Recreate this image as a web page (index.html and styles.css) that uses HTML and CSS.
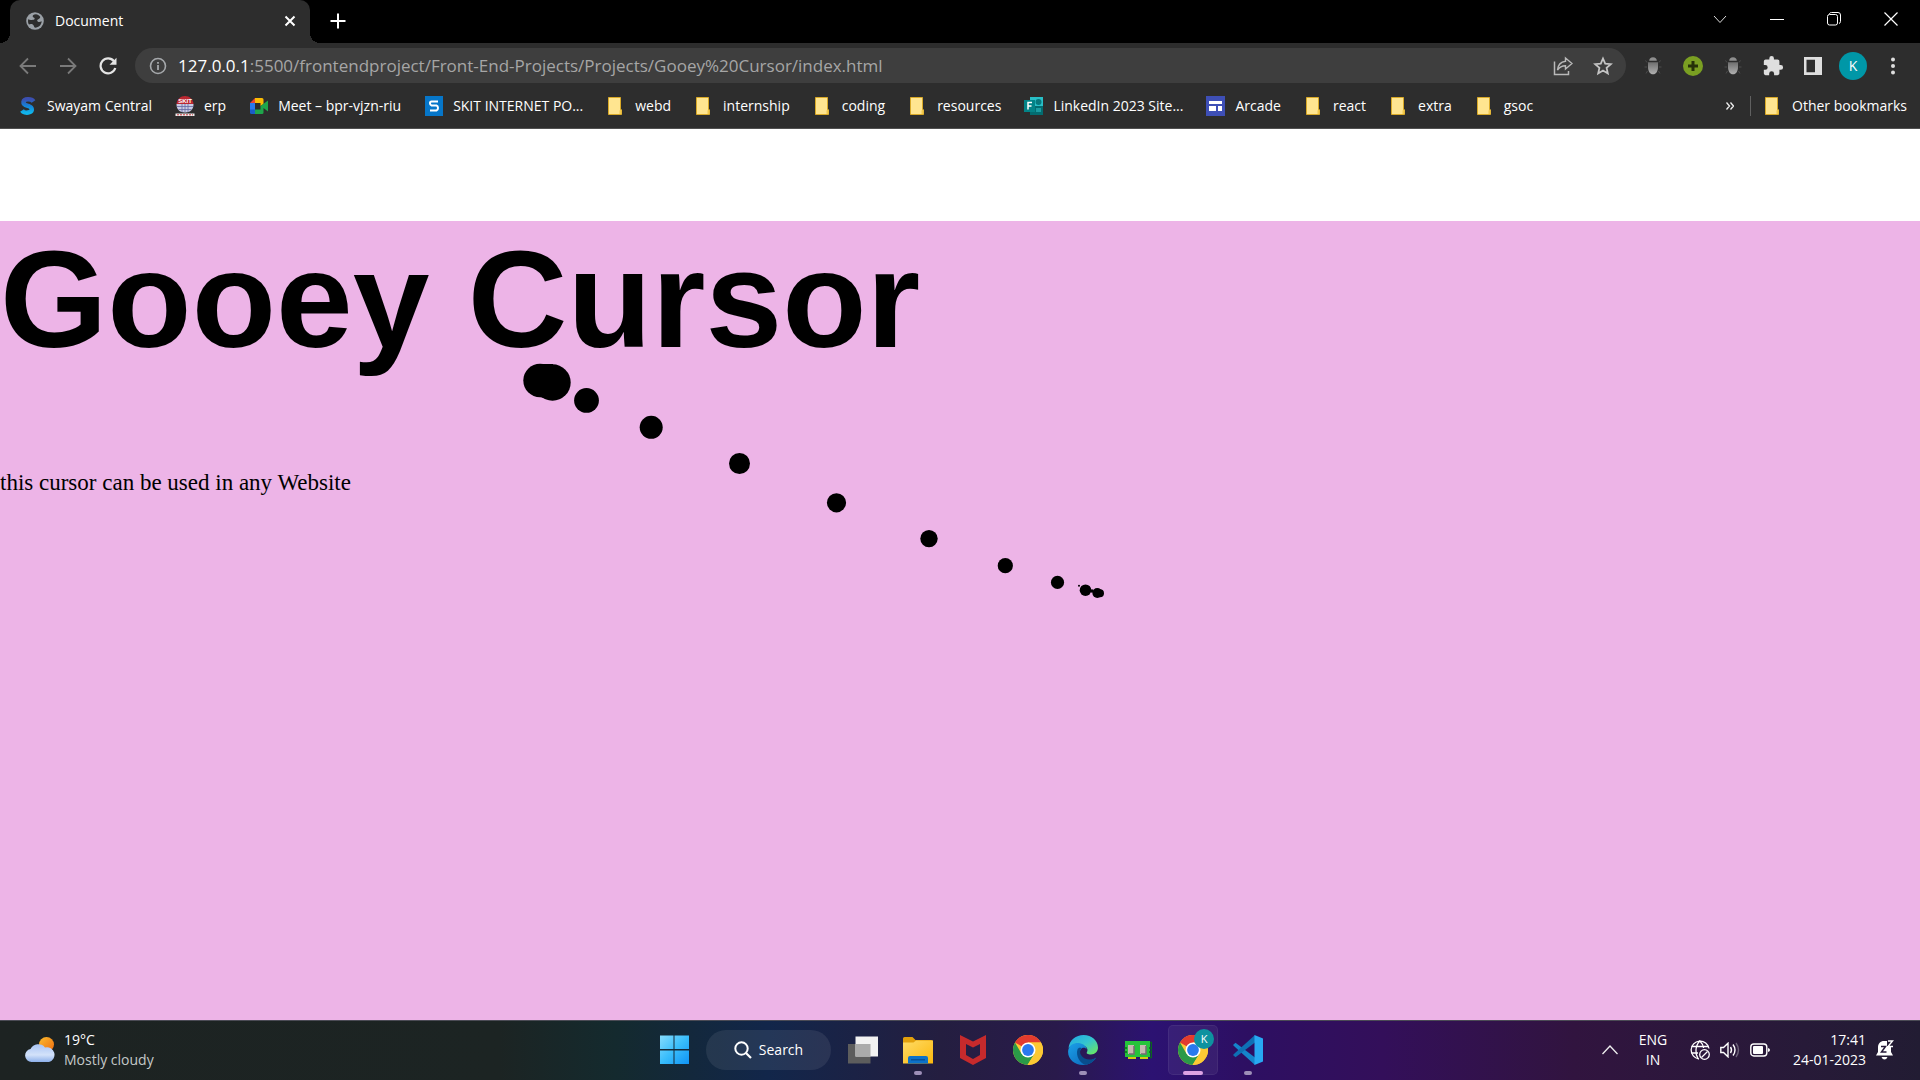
FILE: index.html
```html
<!DOCTYPE html>
<html lang="en">
<head>
<meta charset="utf-8">
<meta name="viewport" content="width=device-width, initial-scale=1">
<title>Document</title>
<link rel="stylesheet" href="styles.css">
</head>
<body>
<svg class="defs" aria-hidden="true">
  <defs>
    <linearGradient id="g-s" x1="0" y1="0" x2="0" y2="1"><stop offset="0" stop-color="#3b4fb0"/><stop offset=".5" stop-color="#1583d8"/><stop offset="1" stop-color="#10b4ea"/></linearGradient>
    <linearGradient id="g-bug" x1="0" y1="0" x2="0" y2="1"><stop offset="0" stop-color="#6e6e6e"/><stop offset="1" stop-color="#b0b0b0"/></linearGradient>
    <linearGradient id="g-win" x1="0" y1="0" x2="1" y2="1"><stop offset="0" stop-color="#86dcfd"/><stop offset=".5" stop-color="#39bdfb"/><stop offset="1" stop-color="#0f93f5"/></linearGradient>
    <linearGradient id="g-sun" x1="0" y1="0" x2="1" y2="1"><stop offset="0" stop-color="#fbbc2c"/><stop offset="1" stop-color="#ee6a10"/></linearGradient>
    <linearGradient id="g-cloud" x1="0" y1="0" x2="0" y2="1"><stop offset="0" stop-color="#a9c4f3"/><stop offset=".6" stop-color="#d3e2fa"/><stop offset="1" stop-color="#8db0ea"/></linearGradient>
    <linearGradient id="g-folder" x1="0" y1="0" x2="1" y2="1"><stop offset="0" stop-color="#ffdb66"/><stop offset="1" stop-color="#fbb80d"/></linearGradient>
    <linearGradient id="g-edge" x1="0" y1="0" x2="1" y2="1"><stop offset="0" stop-color="#1fa6e6"/><stop offset=".5" stop-color="#35c5cf"/><stop offset="1" stop-color="#71ea55"/></linearGradient>
    <linearGradient id="g-edge-low" x1="0" y1="0" x2="1" y2="1"><stop offset="0" stop-color="#1ba0e8"/><stop offset="1" stop-color="#0a62b5"/></linearGradient>
    <symbol id="i-folder" viewBox="0 0 20 20"><path d="M2.500 1.500h12v12.500h1v4.500h-13z" fill="#ffe590" stroke="#d9a927"/><path d="M13.500 18v-3.500l2-1.500v5z" fill="#f1c84c"/></symbol>
    <symbol id="i-bug" viewBox="0 0 20 20"><path d="M4 6.500 2.500 4.500M16 6.500l1.500-2M4 11H1.500M16 11h2.500M4.500 15 3 17.500M15.500 15l1.500 2.500" stroke="#4c4c4c" fill="none"/><path d="M6.200 4.800C6.200 2.600 7.700 1.200 10 1.200s3.800 1.400 3.800 3.600z" fill="#8e8e8e"/><path d="M5 6.200h10V11c0 4-1.800 7.300-5 7.300S5 15 5 11z" fill="url(#g-bug)"/></symbol>
    <symbol id="i-chrome" viewBox="0 0 30 30"><circle cx="15" cy="15" r="15" fill="#fcc934"/><path d="M15 15 2 7.500A15 15 0 0 1 28 7.500H15z" fill="#e33b2e"/><path d="M2 7.500A15 15 0 0 0 14.500 30l7-11.200L15 15 8.500 18.700z" fill="#2a9a48"/><path d="M21.500 18.800 14.500 30A15 15 0 0 0 28 7.500H15z" fill="#fcc934"/><circle cx="15" cy="15" r="7.500" fill="#fff"/><circle cx="15" cy="15" r="5.900" fill="#2a79ee"/></symbol>
  </defs>
</svg>

<header class="browser">
  <div class="tabstrip">
    <div class="tab">
      <svg class="favicon" viewBox="0 0 18 18"><circle cx="9" cy="9" r="8.800" fill="#9aa0a6"/><path d="M10 2.200c-2.500 0-3.500 1-3.300 2.300.2 1.200 2 .8 2 2.200 0 1-1.500 1-2.700 1.200-1.500.3-2.500 0-3.800-.7C1.800 9.500 2 11 3 12.500c1-.6 2.600-.7 3.800 0 1.200.8 1 2.200 2.200 3.300 4-.3 6.500-3.200 6.700-6.500-1.500.6-2.700 1.200-4 .2-1-.8-.5-1.700.5-2.200 1-.6 2.100-1.200 2-2.600C13 3.200 11.500 2.200 10 2.200z" fill="#2d2d2d"/></svg>
      <span class="tab-title">Document</span>
      <button class="tab-close" aria-label="Close tab"><svg width="12" height="12" viewBox="0 0 12 12"><path d="m1.500 1.500 9 9m0-9-9 9" stroke="#fff" stroke-width="2"/></svg></button>
    </div>
    <button class="new-tab" aria-label="New tab"><svg width="16" height="16" viewBox="0 0 16 16"><path d="M8 .5v15M.5 8h15" stroke="#fff" stroke-width="2"/></svg></button>
    <div class="window-controls">
      <button aria-label="Search tabs"><svg width="14" height="14" viewBox="0 0 14 14"><path d="m1 4 6 6.500L13 4" fill="none" stroke="#ddd"/></svg></button>
      <button aria-label="Minimize"><svg width="14" height="14" viewBox="0 0 14 14"><path d="M0 7.500h14" stroke="#fff"/></svg></button>
      <button aria-label="Restore"><svg width="14" height="14" viewBox="0 0 14 14"><rect x=".5" y="2.500" width="10" height="10.500" rx="2" fill="none" stroke="#fff"/><path d="M2.500 2V1.500q.5-1 2-1H11q2.500 0 2.500 2.500v6.500q0 1.500-1.500 2" fill="none" stroke="#fff"/></svg></button>
      <button aria-label="Close"><svg width="14" height="14" viewBox="0 0 14 14"><path d="m.5.5 13 13m0-13-13 13" stroke="#fff" stroke-width="1.200"/></svg></button>
    </div>
  </div>

  <div class="toolbar">
    <nav class="history" aria-label="History">
      <button aria-label="Back"><svg width="18" height="18" viewBox="0 0 18 18"><path d="M17 9H2m7-7.500L1.500 9 9 16.500" fill="none" stroke="#7a7a7a" stroke-width="1.800"/></svg></button>
      <button aria-label="Forward"><svg width="18" height="18" viewBox="0 0 18 18"><path d="M1 9h15M9 1.500 16.500 9 9 16.500" fill="none" stroke="#7a7a7a" stroke-width="1.800"/></svg></button>
      <button aria-label="Reload"><svg width="18" height="18" viewBox="0 0 18 18"><path d="M15 4.200A7.500 7.500 0 1 0 16.300 11" fill="none" stroke="#e4e4e4" stroke-width="2.200"/><path d="M17.500.8v7h-7z" fill="#e4e4e4"/></svg></button>
    </nav>
    <div class="omnibox">
      <svg class="info" width="18" height="18" viewBox="0 0 18 18"><circle cx="9" cy="9" r="7.500" fill="none" stroke="#a5a8ab" stroke-width="1.600"/><path d="M9 8v5M9 5v1.700" stroke="#a5a8ab" stroke-width="1.800"/></svg>
      <label class="host" for="url">127.0.0.1</label><input id="url" class="url" type="text" value=":5500/frontendproject/Front-End-Projects/Projects/Gooey%20Cursor/index.html">
      <button aria-label="Share"><svg width="20" height="20" viewBox="0 0 20 20"><path d="M1.500 5.500v13h14v-3.500" fill="none" stroke="#b9b9b9" stroke-width="1.500"/><path d="M12.500 2 19 7.500 12.500 13v-3.200C9 9.800 6.500 11 4.500 14c.5-5 3.500-8.200 8-8.700z" fill="none" stroke="#b9b9b9" stroke-width="1.400"/></svg></button>
      <button aria-label="Bookmark this tab"><svg width="20" height="20" viewBox="0 0 20 20"><path d="m10 2.500 2.200 5.200 5.600.5-4.200 3.700 1.200 5.500L10 14.500l-4.800 2.900 1.200-5.500-4.200-3.700 5.600-.5z" fill="none" stroke="#c4c4c4" stroke-width="1.800"/></svg></button>
    </div>
    <div class="extensions">
      <button aria-label="Debugger"><svg width="20" height="20"><use href="#i-bug"/></svg></button>
      <button aria-label="Add"><svg width="20" height="20" viewBox="0 0 20 20"><circle cx="10" cy="10" r="10" fill="#7a9f22"/><path d="M10 5v10M5 10h10" stroke="#263209" stroke-width="3"/></svg></button>
      <button aria-label="Inspector"><svg width="20" height="20"><use href="#i-bug"/></svg></button>
      <button aria-label="Extensions"><svg width="22" height="22" viewBox="0 0 24 24"><path d="M20.500 11H19V7a2 2 0 0 0-2-2h-4V3.500a2.500 2.500 0 0 0-5 0V5H4a2 2 0 0 0-2 2v3.800h1.500a2.700 2.700 0 0 1 0 5.400H2V20c0 1.100.9 2 2 2h3.800v-1.500a2.700 2.700 0 0 1 5.400 0V22H17a2 2 0 0 0 2-2v-4h1.500a2.500 2.500 0 0 0 0-5z" fill="#dedede"/></svg></button>
      <button aria-label="Side panel"><svg width="18" height="18" viewBox="0 0 18 18"><path d="M0 0h18v18H0zm2.500 2.800v12.500h8.500V2.800z" fill="#dedede" fill-rule="evenodd"/></svg></button>
      <button aria-label="Profile"><span class="avatar">K</span></button>
      <button aria-label="Menu"><svg width="4" height="18" viewBox="0 0 4 18"><circle cx="2" cy="2.500" r="2" fill="#dedede"/><circle cx="2" cy="9" r="2" fill="#dedede"/><circle cx="2" cy="15.500" r="2" fill="#dedede"/></svg></button>
    </div>
  </div>

  <nav class="bookmarks" aria-label="Bookmarks">
    <a href="#"><svg viewBox="0 0 20 20"><path d="M15.500 5.500C13.500 2.500 6 2.500 5.500 5.800S9 9.500 11.500 10.500s3.500 4.500 0 5.700-6.500-.2-7.500-1.700" fill="none" stroke="url(#g-s)" stroke-width="4.500"/></svg>Swayam Central</a>
    <a href="#"><svg viewBox="0 0 20 20"><path d="M1.500 8C2 3 5.500 0 10 0s8 3 8.500 8z" fill="#bb2831"/><path d="M1.500 8h17c0 5.500-3 8.500-8.500 8.500S1.500 13.500 1.500 8z" fill="#c9cbe4"/><path d="M2 10.500h16M3.500 13.500h13M7 8v8M10 8v8M13 8v8" stroke="#6469a3" stroke-width=".8"/><text x="10" y="7.200" class="tiny-logo">SKIT</text><path d="M.5 17.500h19V20H.5z" fill="#eee"/><path d="M2 18.800h16" stroke="#c7373c" stroke-dasharray="2 1"/></svg>erp</a>
    <a href="#"><svg viewBox="0 0 20 20"><path d="M1 7 6 2v5z" fill="#ea4335"/><path d="M6 2h7q1.500 0 1.500 1.500V8l-3 2V7H6z" fill="#fbbc04"/><path d="M1 7h5v7H1z" fill="#2a79ee"/><path d="M1 13.500h5V18H2.500Q1 18 1 16.500z" fill="#1a5cc8"/><path d="M6 13.500h5.500V10L19 4.500v11L14.500 12v4.500q0 1.500-1.500 1.500H6z" fill="#1fa64b"/></svg>Meet – bpr-vjzn-riu</a>
    <a href="#"><svg viewBox="0 0 20 20"><path d="M1 0h18v20H1z" fill="#0676c9"/><path d="M14 5.500H7.500Q6 5.500 6 7.300T7.500 9.500h5q1.500.5 1.500 2.500t-1.500 2.500H6" fill="none" stroke="#fff" stroke-width="2"/></svg>SKIT INTERNET PO...</a>
    <a href="#"><svg><use href="#i-folder"/></svg>webd</a>
    <a href="#"><svg><use href="#i-folder"/></svg>internship</a>
    <a href="#"><svg><use href="#i-folder"/></svg>coding</a>
    <a href="#"><svg><use href="#i-folder"/></svg>resources</a>
    <a href="#"><svg viewBox="0 0 20 20"><path d="M6 1h13v9H6z" fill="#28bfc7"/><path d="M6 10h13v9H6z" fill="#036c70"/><circle cx="14.500" cy="6" r="3" fill="#07777c"/><path d="M12 12h5v4h-5z" fill="#1b9ca2"/><path d="M0 4h11v12H0z" fill="#038387"/><path d="M4 13.500v-7h4M4 10h3.500" stroke="#fff" stroke-width="1.500" fill="none"/></svg>LinkedIn 2023 Site...</a>
    <a href="#"><svg viewBox="0 0 20 20"><path d="M0 0h19v20H0z" fill="#3e4fb6"/><path d="M3 5h13v3H3zm0 5h7v5H3zm9 0h4v5h-4z" fill="#fff"/></svg>Arcade</a>
    <a href="#"><svg><use href="#i-folder"/></svg>react</a>
    <a href="#"><svg><use href="#i-folder"/></svg>extra</a>
    <a href="#"><svg><use href="#i-folder"/></svg>gsoc</a>
    <button class="more" aria-label="More bookmarks"><svg width="8" height="8" viewBox="0 0 8 8"><path d="m.5.500 3 3.500-3 3.500m4-7 3 3.500-3 3.500" fill="none" stroke="#eee" stroke-width="1.300"/></svg></button>
    <a class="other" href="#"><svg><use href="#i-folder"/></svg>Other bookmarks</a>
  </nav>
</header>

<main class="page">
  <section class="hero">
    <h1>Gooey Cursor</h1>
    <p>this cursor can be used in any Website</p>
    <svg class="cursor-trail" width="1200" height="400" viewBox="0 0 1200 400" aria-hidden="true">
      <circle cx="540" cy="159.500" r="16.700"/><path d="M540 142.900h13L551 179l-18-5z"/><circle cx="552.500" cy="161.500" r="18.200"/>
      <circle cx="586.500" cy="179.400" r="12.400"/><circle cx="651.200" cy="206.300" r="11.500"/>
      <circle cx="739.500" cy="242.500" r="10.500"/><circle cx="836.500" cy="281.800" r="9.600"/>
      <circle cx="929" cy="317.600" r="8.700"/><circle cx="1005.300" cy="344.700" r="7.600"/>
      <circle cx="1057.500" cy="361.400" r="6.600"/><circle cx="1079" cy="364.800" r="1"/>
      <circle cx="1085.500" cy="369.200" r="5.800"/><circle cx="1092" cy="370" r="1.800"/>
      <circle cx="1097.300" cy="372" r="4.900"/><circle cx="1100" cy="372.300" r="4"/>
    </svg>
  </section>
</main>

<footer class="taskbar">
  <button class="weather">
    <svg width="30" height="26" viewBox="0 0 30 26"><circle cx="21.500" cy="7.500" r="7.500" fill="url(#g-sun)"/><path d="M6.500 25a6.500 6.500 0 0 1-1-12.900A8.500 8.500 0 0 1 20 10.500a7.500 7.500 0 0 1 4 14.500z" fill="url(#g-cloud)"/></svg>
    <span class="weather-text"><span>19°C</span><span class="muted">Mostly cloudy</span></span>
  </button>
  <div class="apps">
    <button class="app" aria-label="Start"><svg width="30" height="30" viewBox="0 0 30 30"><path d="M1 .500h13.500V14H1zm14.500 0H30V14H15.500zM1 15.500h13.500V29H1zm14.500 0H30V29H15.500z" fill="url(#g-win)"/></svg></button>
    <button class="search"><svg width="18" height="18" viewBox="0 0 18 18"><circle cx="7.500" cy="7.500" r="6.200" fill="none" stroke="#fff" stroke-width="2"/><path d="m12 12 5 5" stroke="#fff" stroke-width="2.200"/></svg>Search</button>
    <button class="app" aria-label="Task view"><svg width="30" height="30" viewBox="0 0 30 30"><path d="M0 9h22.500v19.500H0z" fill="#5d5d5d"/><path d="M7.500 1.500H30v20H7.500z" fill="#f2f2f2"/><path d="M7.500 9h15v12.500h-15z" fill="#ababab"/></svg></button>
    <button class="app running" aria-label="File Explorer"><svg width="30" height="30" viewBox="0 0 30 30"><path d="M0 8V3.500Q0 2 1.500 2h8l3 3H28q2 0 2 2v3H0z" fill="#e2a00c"/><path d="M0 7.500h10.500L13 5.500h17V28.500H0z" fill="url(#g-folder)"/><path d="M5 28.500V23q0-2 2-2h16q2 0 2 2v5.500z" fill="#0d72c8"/><path d="M8 24.800h14" stroke="#074a8f" stroke-width="1.200"/></svg></button>
    <button class="app" aria-label="McAfee"><svg width="30" height="30" viewBox="0 0 30 30"><path d="m2 0 13 6.500L28 0v23l-13 7-13-7zm6 9v11l7 4 7-4V9l-7 3.500z" fill="#c62a2c" fill-rule="evenodd"/></svg></button>
    <button class="app" aria-label="Chrome"><svg width="30" height="30"><use href="#i-chrome"/></svg></button>
    <button class="app running" aria-label="Edge"><svg width="30" height="30" viewBox="0 0 30 30"><path d="M.5 13C1.500 5 8 0 15.500 0 24 0 30 6 30 12.500c0 4-3 7-7 7-3.500 0-5-1-4-2.500 1.200-2 .5-5.500-4-6.500C9 9.500 3 10 .5 13z" fill="url(#g-edge)"/><path d="M.2 15.500C1 9.500 7 7.300 12 8.200c4 .8 6.500 3.500 6.700 6.300-1-2-4-2.500-5.700-.5-4 5 1 12 8.500 11.300 3-.2 5-1.500 6.800-2.800C25.500 27 21 30 15 30 6 30-.8 23.500.2 15.500z" fill="url(#g-edge-low)"/><path d="M9.500 14.500c-2 6 2.500 14 8 15.300 4.500-.7 8.200-3.300 10.500-7-5 3-12 2.200-15-2.800-1.500-2.500-1-5 .5-7-2-.5-3.500 0-4 1.500z" fill="#084d8d"/></svg></button>
    <button class="app" aria-label="Memory cleaner"><svg width="28" height="20" viewBox="0 0 28 20"><path d="M1 1h25v16H1z" fill="#25c43a"/><path d="M26 2.500h1.500v15H26M0 8h3M0 12h3m22-4h3m-3 4h3" fill="none" stroke="#0b6321" stroke-width="1.500"/><path d="M4 5h6v9H4zm12 0h6v9h-6z" fill="#c6b9b1"/><path d="M5 14h5V6M17 14h5V6" stroke="#756b72" fill="none" stroke-width="1.500"/><path d="M4 18h8m4 0h8" stroke="#d3ca11" stroke-width="2"/></svg></button>
    <button class="app running active" aria-label="Chrome, K"><svg width="30" height="30"><use href="#i-chrome"/></svg><span class="badge">K</span></button>
    <button class="app running" aria-label="Visual Studio Code"><svg width="30" height="30" viewBox="0 0 30 30"><path d="m0 10 2.500-2.200L22 22.500V30L2 12z" fill="#1585cb"/><path d="m0 20 2.500 2.200L22 7.500V0L2 18z" fill="#0e70b5"/><path d="m21.500 0 8.500 3.500v23L21.500 30z" fill="#28a9f2"/></svg></button>
  </div>
  <div class="tray">
    <button class="chevron" aria-label="Show hidden icons"><svg width="16" height="10" viewBox="0 0 16 10"><path d="m.5 9 7.500-8 7.500 8" fill="none" stroke="#eee" stroke-width="1.300"/></svg></button>
    <button class="lang"><span>ENG</span><span>IN</span></button>
    <button class="status" aria-label="Network, volume and battery">
      <svg width="20" height="20" viewBox="0 0 20 20"><g fill="none" stroke="#fff" stroke-width="1.300"><path d="M9 19A9 9 0 1 1 19 8.500"/><path d="M8 18.500C5 14 5 6 9.800 1c2.500 2.300 3.500 5 3.800 7M1.500 6.500h17M1.500 13H8"/><circle cx="14.500" cy="14.500" r="4.800"/><path d="m11.500 17.500 6-6"/></g></svg>
      <svg width="20" height="16" viewBox="0 0 20 16"><g fill="none" stroke="#fff" stroke-width="1.400"><path d="M.8 5.500h2.700L8 1.200v13.600l-4.500-4.300H.8z"/><path d="M10.500 5q2 3 0 6M13 2.500q4 5.500 0 11"/><path d="M16 1q5 7 0 14" stroke="#6c6178"/></g></svg>
      <svg width="20" height="14" viewBox="0 0 20 14"><rect x=".8" y="1" width="16" height="12" rx="3" fill="none" stroke="#fff" stroke-width="1.400"/><rect x="3" y="3" width="10" height="8" rx="1" fill="#fff"/><path d="M18 5q2 .5 2 2t-2 2z" fill="#fff"/></svg>
    </button>
    <button class="clock"><span>17:41</span><span>24-01-2023</span></button>
    <button class="bell" aria-label="Notifications"><svg width="18" height="20" viewBox="0 0 18 20"><path d="M0 15.500 2 12V7.500C2 3.500 4.500 1 8 1h3v5h4l0 6 2 3.500zM5.500 17h6q-1 2.500-3 2.500t-3-2.500z" fill="#fff"/><path d="M5 6.500h4.500L5.500 12h5" fill="none" stroke="#251a38" stroke-width="1.500"/><path d="M12 1h4.500L12 6.500h5" fill="none" stroke="#fff" stroke-width="1.400"/></svg></button>
  </div>
</footer>
</body>
</html>
```
FILE: styles.css
```css
* { box-sizing: border-box; }

body {
  margin: 0;
  min-height: 100vh;
  display: flex;
  flex-direction: column;
  background: #fff;
  font-family: "Open Sans", "Noto Sans", sans-serif;
  font-size: 14px;
  line-height: 20px;
}

button {
  display: flex;
  align-items: center;
  justify-content: center;
  margin: 0;
  padding: 0;
  border: 0;
  background: none;
  color: inherit;
  font: inherit;
}

svg { display: block; flex: none; }
.defs { position: absolute; width: 0; height: 0; }

/* Browser frame */
.browser {
  background: #2d2d2d;
  border-bottom: 1px solid #505050;
  color: #fff;
}

.tabstrip {
  display: flex;
  height: 43px;
  padding: 0 1px 0 10px;
  background: #000;
}

.tab {
  position: relative;
  display: flex;
  align-items: center;
  width: 300px;
  padding: 0 13px 2px 16px;
  border-radius: 10px 10px 0 0;
  background: #2d2d2d;
}

.tab::before,
.tab::after {
  content: "";
  position: absolute;
  bottom: 0;
  width: 10px;
  height: 10px;
}
.tab::before { right: 100%; background: radial-gradient(circle at 0 0, #000 10px, #2d2d2d 10px); }
.tab::after { left: 100%; background: radial-gradient(circle at 100% 0, #000 10px, #2d2d2d 10px); }

.favicon { width: 18px; height: 18px; }
.tab-title { flex: 1; padding-left: 11px; }
.tab-close { width: 14px; height: 20px; }
.new-tab { width: 56px; padding-bottom: 1px; }
.window-controls { display: flex; height: 37px; margin-left: auto; }
.window-controls button { width: 57px; }

.toolbar {
  display: flex;
  align-items: center;
  height: 45px;
  padding: 0 7px 0 8px;
}
.history, .extensions { display: flex; }
.history button, .extensions button { width: 40px; height: 36px; }

.omnibox {
  display: flex;
  flex: 1;
  align-items: center;
  height: 35px;
  margin: 0 7px;
  padding: 0 3px 0 14px;
  border-radius: 18px;
  background: #3e3e3e;
  font-size: 17px;
}
.omnibox button { width: 40px; height: 32px; }
.info { margin-right: 11px; }
.url {
  flex: 1;
  min-width: 0;
  padding: 0;
  border: 0;
  outline: 0;
  background: none;
  color: #a6a6a6;
  font: inherit;
}

.avatar {
  width: 28px;
  border-radius: 50%;
  background: #0097a7;
  line-height: 28px;
}

.bookmarks {
  display: flex;
  align-items: center;
  gap: 23px;
  height: 40px;
  padding: 0 13px 4px 18px;
}
.bookmarks a {
  display: flex;
  align-items: center;
  gap: 9px;
  color: #fff;
  text-decoration: none;
  white-space: nowrap;
}
.bookmarks a svg { width: 20px; height: 20px; }
.tiny-logo {
  fill: #fff;
  font: bold 6px "Liberation Sans", sans-serif;
  text-anchor: middle;
}
.more { width: 20px; margin-left: auto; margin-right: -13px; }
.bookmarks .other { padding-left: 12px; border-left: 1px solid #606060; }

/* Page */
.page {
  display: flex;
  flex: 1;
  flex-direction: column;
  padding-top: 92px;
}

.hero {
  position: relative;
  flex: 1;
  background: #edb4e7;
  color: #000;
}
.hero h1 {
  margin: 0;
  font: bold 138px/156px "Liberation Sans", Arial, sans-serif;
}
.hero p {
  margin: 92px 0 0;
  font: 23px/28px "Liberation Serif", "Times New Roman", serif;
}
.cursor-trail { position: absolute; top: 0; left: 0; }

/* Taskbar */
.taskbar {
  display: grid;
  grid-template-columns: 1fr auto 1fr;
  align-items: center;
  height: 60px;
  padding-bottom: 2px;
  border-top: 1px solid #4b4b55;
  background: linear-gradient(90deg, #1d2322 0, #1c2423 26%, #142a2e 32%, #12264a 40%, #241e40 49%, #291a4b 55%, #2c1272 60%, #2d0f62 65%, #330f5a 72%, #31143f 82%, #271a38 94%, #221c33 100%);
  color: #fff;
}

.weather { justify-self: start; gap: 9px; padding-left: 25px; text-align: left; }
.weather-text, .lang, .clock { display: flex; flex-direction: column; }
.muted { color: #c4c8c8; }

.apps { display: flex; align-items: center; gap: 5px; padding-left: 2px; }
.app { position: relative; width: 50px; height: 50px; }
.running::after {
  content: "";
  position: absolute;
  bottom: 0;
  left: 21px;
  width: 8px;
  height: 4px;
  border-radius: 2px;
  background: #9d8fb8;
}
.active {
  border-radius: 5px;
  background: rgba(255, 255, 255, .06);
  box-shadow: inset 0 0 0 1px rgba(255, 255, 255, .06);
}
.active::after { left: 15px; width: 20px; background: #dda3e4; }
.badge {
  position: absolute;
  top: 4px;
  right: 4px;
  width: 20px;
  border-radius: 50%;
  background: #0e929f;
  font-size: 11px;
  line-height: 20px;
}

.search {
  gap: 7px;
  width: 125px;
  height: 40px;
  margin: 0 2px;
  border-radius: 20px;
  background: rgba(255, 255, 255, .08);
}

.tray {
  display: flex;
  align-items: center;
  justify-self: end;
  padding-right: 26px;
}
.chevron { width: 40px; height: 40px; }
.lang { width: 46px; }
.status { gap: 10px; margin: 0 20px 0 14px; }
.clock { width: 76px; align-items: flex-end; }
.bell { margin-left: 10px; }
```
